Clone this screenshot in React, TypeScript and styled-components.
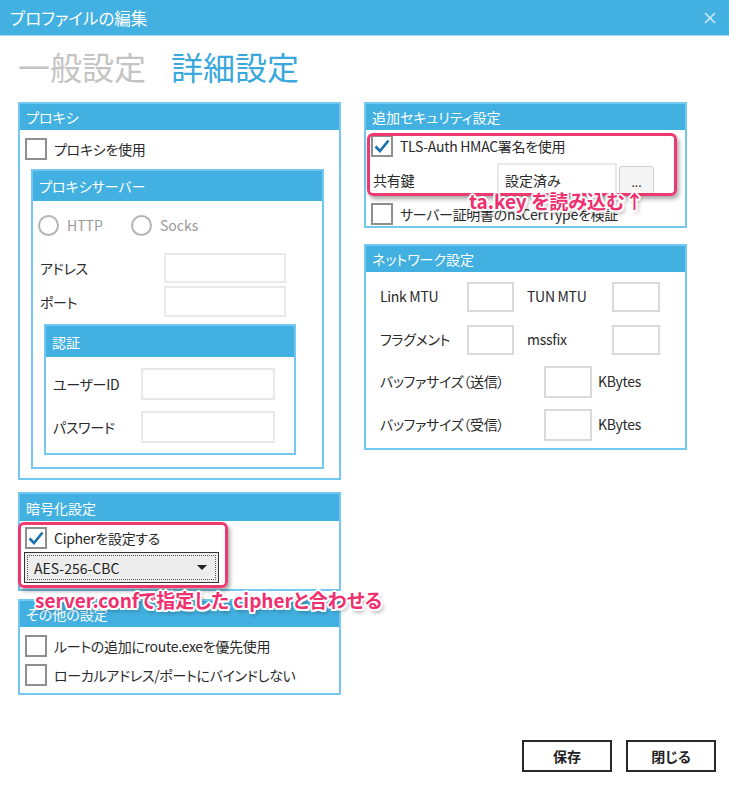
import React from "react";
import styled, { createGlobalStyle } from "styled-components";

const Global = createGlobalStyle`
  html, body { margin: 0; padding: 0; background: #fff; }
  body {
    font-family: "Noto Sans CJK JP", "Noto Sans", sans-serif;
    font-feature-settings: "palt";
    color: #2a2a2a;
  }
  * { box-sizing: border-box; }
`;

const BLUE = "#42b0e0";
const BORDER = "#74c7ee";

const Window = styled.div`
  position: relative;
  width: 729px;
  height: 800px;
  display: flex;
  flex-direction: column;
  background: #fff;
  overflow: hidden;
`;

const TitleBar = styled.div`
  height: 36px;
  background: ${BLUE};
  border-bottom: 1px solid #a6daf2;
  display: flex;
  align-items: center;
  justify-content: space-between;
  padding: 0 13px 0 10px;
  color: #fff;
  font-size: 16.5px;
`;

const TabRow = styled.div`
  display: flex;
  gap: 25px;
  padding: 8px 18px 0;
  height: 66px;
  font-size: 32px;
  line-height: 44px;
`;

const Tab = styled.div<{ $active?: boolean }>`
  color: ${(p) => (p.$active ? "#3aa8dc" : "#c4c4c4")};
`;

const Columns = styled.div`
  display: grid;
  grid-template-columns: 323px 323px;
  column-gap: 23px;
  padding: 0 18px;
  align-items: start;
`;

const Column = styled.div`
  display: flex;
  flex-direction: column;
`;

const Panel = styled.section<{ $mt?: number; $ml?: number; $mr?: number; $pb?: number }>`
  border: 2px solid ${BORDER};
  background: #fff;
  margin-top: ${(p) => p.$mt ?? 0}px;
  margin-left: ${(p) => p.$ml ?? 0}px;
  margin-right: ${(p) => p.$mr ?? 0}px;
  padding-bottom: ${(p) => p.$pb ?? 0}px;
`;

const PanelHeader = styled.div<{ $h: number }>`
  height: ${(p) => p.$h}px;
  background: ${BLUE};
  color: #fff;
  font-size: 14px;
  display: flex;
  align-items: center;
  padding-left: 6px;
`;

const Row = styled.div<{ $mt?: number; $pl?: number; $h?: number }>`
  display: flex;
  align-items: center;
  margin-top: ${(p) => p.$mt ?? 0}px;
  padding-left: ${(p) => p.$pl ?? 0}px;
  height: ${(p) => (p.$h ? `${p.$h}px` : "auto")};
  font-size: 14px;
`;

const CheckRow = styled(Row)`
  gap: 7px;
`;

const Box = styled.span`
  width: 22px;
  height: 22px;
  border: 2px solid #8f8f8f;
  background: #fff;
  display: inline-flex;
  align-items: center;
  justify-content: center;
  flex: none;
`;

const Label = styled.span<{ $w?: number; $muted?: boolean }>`
  width: ${(p) => (p.$w ? `${p.$w}px` : "auto")};
  flex: none;
  color: ${(p) => (p.$muted ? "#9a9a9a" : "#2a2a2a")};
  white-space: nowrap;
  letter-spacing: -0.3px;
`;

const TextBox = styled.div<{ $w: number; $h: number }>`
  width: ${(p) => p.$w}px;
  height: ${(p) => p.$h}px;
  border: 2px solid #e9e9e9;
  background: #fff;
  flex: none;
  display: flex;
  align-items: center;
  padding-left: 6px;
  font-size: 14px;
`;

const NetBox = styled(TextBox)`
  border-color: #dadada;
`;

const Radio = styled.span`
  width: 21px;
  height: 21px;
  border-radius: 50%;
  border: 2px solid #b4b4b4;
  flex: none;
`;

const RadioItem = styled.div<{ $w: number }>`
  display: flex;
  align-items: center;
  gap: 8px;
  width: ${(p) => p.$w}px;
  font-size: 14px;
  color: #9a9a9a;
`;

const Browse = styled.div`
  width: 35px;
  height: 29px;
  margin-left: 2px;
  border: 1px solid #cfcfcf;
  border-radius: 3px;
  background: #f5f5f5;
  display: flex;
  align-items: center;
  justify-content: center;
  font-size: 12px;
  line-height: 1;
  padding-top: 4px;
`;

const Select = styled.div`
  margin: 3px 0 0 4px;
  width: 195px;
  height: 31px;
  border: 1px solid #333;
  background: #ededed;
  padding: 2px;
`;

const SelectInner = styled.div`
  height: 100%;
  border: 1px dotted #555;
  display: flex;
  align-items: center;
  justify-content: space-between;
  padding: 0 8px 0 6px;
  font-size: 14px;
  color: #222;
`;

const Caret = styled.span`
  width: 0;
  height: 0;
  border-left: 5px solid transparent;
  border-right: 5px solid transparent;
  border-top: 5px solid #222;
`;

const NetRow = styled.div<{ $cols: string; $mt: number; $h: number }>`
  display: grid;
  grid-template-columns: ${(p) => p.$cols};
  align-items: center;
  height: ${(p) => p.$h}px;
  margin-top: ${(p) => p.$mt}px;
  padding-left: 14px;
  font-size: 14px;
`;

const NetLabel = styled(Label)`
  margin-top: -3px;
`;

const Footer = styled.div`
  margin-top: auto;
  display: flex;
  justify-content: flex-end;
  gap: 14px;
  padding: 0 13px 28px 0;
`;

const Button = styled.button`
  width: 90px;
  height: 32px;
  border: 2px solid #2a2a2a;
  background: #fff;
  font-family: inherit;
  font-feature-settings: "palt";
  font-size: 14px;
  font-weight: 700;
  color: #222;
  padding: 0;
`;

const Callout = styled.div<{ $x: number; $y: number; $w: number; $h: number }>`
  position: absolute;
  left: ${(p) => p.$x}px;
  top: ${(p) => p.$y}px;
  width: ${(p) => p.$w}px;
  height: ${(p) => p.$h}px;
  border: 3px solid #ec3a70;
  border-radius: 6px;
  box-shadow: 2px 3px 4px rgba(0, 0, 0, 0.35);
  pointer-events: none;
`;

const Note = styled.div<{ $x: number; $y: number }>`
  position: absolute;
  left: ${(p) => p.$x}px;
  top: ${(p) => p.$y}px;
  font-size: 19px;
  font-weight: 700;
  line-height: 24px;
  color: #f0306e;
  white-space: nowrap;
  text-shadow: -1.5px -1.5px 0 #fff, 1.5px -1.5px 0 #fff, -1.5px 1.5px 0 #fff,
    1.5px 1.5px 0 #fff, 0 -2px 0 #fff, 0 2px 0 #fff, -2px 0 0 #fff, 2px 0 0 #fff,
    2px 3px 4px rgba(0, 0, 0, 0.45);
`;

const Check = () => (
  <svg width="16" height="14" viewBox="0 0 16 14">
    <path d="M1.5 7.5 L6 12 L14.5 1.5" fill="none" stroke="#1b6fae" strokeWidth="2.6" />
  </svg>
);

const CheckBox = ({ checked }: { checked?: boolean }) => <Box>{checked && <Check />}</Box>;

const Close = () => (
  <svg width="12" height="12" viewBox="0 0 12 12">
    <path d="M1 1 L11 11 M11 1 L1 11" stroke="#cdeaf8" strokeWidth="1.6" />
  </svg>
);

export default function App() {
  return (
    <Window>
      <Global />
      <TitleBar>
        <span>プロファイルの編集</span>
        <Close />
      </TitleBar>
      <TabRow>
        <Tab>一般設定</Tab>
        <Tab $active>詳細設定</Tab>
      </TabRow>
      <Columns>
        <Column>
          <Panel $pb={9}>
            <PanelHeader $h={26}>プロキシ</PanelHeader>
            <CheckRow $mt={8} $pl={5}>
              <CheckBox />
              <Label>プロキシを使用</Label>
            </CheckRow>
            <Panel $mt={9} $ml={11} $mr={15} $pb={12}>
              <PanelHeader $h={30}>プロキシサーバー</PanelHeader>
              <Row $mt={13} $pl={5} $h={22}>
                <RadioItem $w={93}>
                  <Radio />
                  HTTP
                </RadioItem>
                <RadioItem $w={100}>
                  <Radio />
                  Socks
                </RadioItem>
              </Row>
              <Row $mt={17} $pl={7}>
                <Label $w={124}>アドレス</Label>
                <TextBox $w={122} $h={30} />
              </Row>
              <Row $mt={3} $pl={7}>
                <Label $w={124}>ポート</Label>
                <TextBox $w={122} $h={31} />
              </Row>
              <Panel $mt={7} $ml={11} $mr={26} $pb={10}>
                <PanelHeader $h={31}>認証</PanelHeader>
                <Row $mt={11} $pl={7}>
                  <Label $w={88}>ユーザーID</Label>
                  <TextBox $w={134} $h={32} />
                </Row>
                <Row $mt={11} $pl={7}>
                  <Label $w={88}>パスワード</Label>
                  <TextBox $w={134} $h={32} />
                </Row>
              </Panel>
            </Panel>
          </Panel>

          <Panel $mt={12} $pb={6}>
            <PanelHeader $h={27}>暗号化設定</PanelHeader>
            <CheckRow $mt={6} $pl={5}>
              <CheckBox checked />
              <Label>Cipherを設定する</Label>
            </CheckRow>
            <Select>
              <SelectInner>
                AES-256-CBC
                <Caret />
              </SelectInner>
            </Select>
          </Panel>

          <Panel $mt={8} $pb={7}>
            <PanelHeader $h={26}>その他の設定</PanelHeader>
            <CheckRow $mt={8} $pl={5}>
              <CheckBox />
              <Label>ルートの追加にroute.exeを優先使用</Label>
            </CheckRow>
            <CheckRow $mt={7} $pl={5}>
              <CheckBox />
              <Label>ローカルアドレス/ポートにバインドしない</Label>
            </CheckRow>
          </Panel>
        </Column>

        <Column>
          <Panel $pb={1}>
            <PanelHeader $h={26}>追加セキュリティ設定</PanelHeader>
            <CheckRow $mt={5} $pl={5}>
              <CheckBox checked />
              <Label>TLS-Auth HMAC署名を使用</Label>
            </CheckRow>
            <Row $mt={6} $pl={7}>
              <Label $w={124}>共有鍵</Label>
              <TextBox $w={120} $h={34}>設定済み</TextBox>
              <Browse>...</Browse>
            </Row>
            <CheckRow $mt={6} $pl={5}>
              <CheckBox />
              <Label>サーバー証明書のnsCertTypeを検証</Label>
            </CheckRow>
          </Panel>

          <Panel $mt={16} $pb={7}>
            <PanelHeader $h={26}>ネットワーク設定</PanelHeader>
            <NetRow $cols="87px 47px 13px 85px 48px" $mt={10} $h={30}>
              <NetLabel>Link MTU</NetLabel>
              <NetBox $w={47} $h={30} />
              <span />
              <NetLabel>TUN MTU</NetLabel>
              <NetBox $w={48} $h={30} />
            </NetRow>
            <NetRow $cols="87px 47px 13px 85px 48px" $mt={13} $h={30}>
              <NetLabel>フラグメント</NetLabel>
              <NetBox $w={47} $h={30} />
              <span />
              <NetLabel>mssfix</NetLabel>
              <NetBox $w={48} $h={30} />
            </NetRow>
            <NetRow $cols="164px 48px 6px auto" $mt={11} $h={32}>
              <NetLabel>バッファサイズ（送信）</NetLabel>
              <NetBox $w={48} $h={32} />
              <span />
              <NetLabel>KBytes</NetLabel>
            </NetRow>
            <NetRow $cols="164px 48px 6px auto" $mt={11} $h={32}>
              <NetLabel>バッファサイズ（受信）</NetLabel>
              <NetBox $w={48} $h={32} />
              <span />
              <NetLabel>KBytes</NetLabel>
            </NetRow>
          </Panel>
        </Column>
      </Columns>

      <Footer>
        <Button>保存</Button>
        <Button>閉じる</Button>
      </Footer>

      <Callout $x={367} $y={133} $w={310} $h={63} />
      <Note $x={469} $y={189}>ta.key を読み込む↑</Note>
      <Callout $x={18} $y={522} $w={210} $h={66} />
      <Note $x={35} $y={588}>server.confで指定した cipherと合わせる</Note>
    </Window>
  );
}
